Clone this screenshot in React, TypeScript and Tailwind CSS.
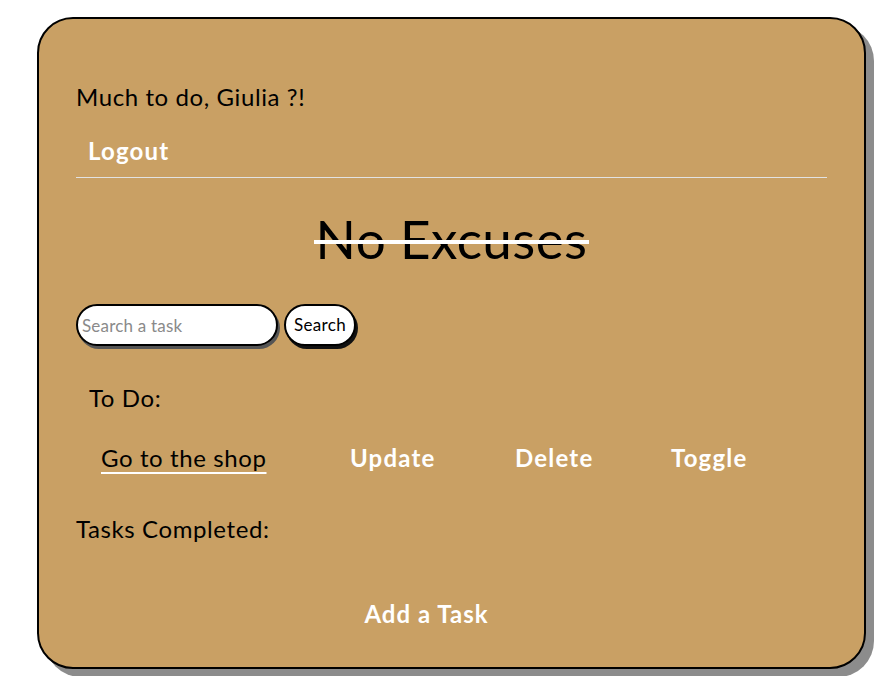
export default function App() {
  return (
    <div
      className="min-h-screen bg-white pt-[17px] pl-[37px] tracking-[0.6px]"
      style={{ fontFamily: "Lato, 'Open Sans', sans-serif" }}
    >
      <div className="w-[829px] h-[652px] rounded-[36px] border-2 border-black bg-[#c9a064] shadow-[8px_8px_0_#8c8c8c] px-[37px] pt-[63px]">
        <p className="text-[24px] leading-[30px] text-black">Much to do, Giulia ?!</p>
        <div className="mt-[24px] border-b border-[#e2e2e2] pb-[11px]">
          <a className="pl-[12px] text-[24px] leading-[30px] font-bold tracking-[1.2px] text-white">Logout</a>
        </div>

        <h1 className="mt-[31px] text-center text-[53px] leading-[60px] tracking-[0.4px] text-black">
          <span className="relative inline-block">
            No Excuses
            <span className="absolute -left-[2px] -right-[2px] top-[31px] h-[4px] bg-white" />
          </span>
        </h1>

        <form className="mt-[35px] flex items-center gap-[6px]">
          <input
            placeholder="Search a task"
            className="h-[42px] w-[202px] rounded-full border-2 border-black bg-white px-[4px] text-[17px] tracking-[0.2px] text-black placeholder:text-[#8a8a8a] shadow-[2px_3px_0_#555] outline-none"
          />
          <button
            type="button"
            className="h-[42px] w-[72px] rounded-full border-2 border-black bg-white text-[17px] tracking-[0.3px] text-black shadow-[2px_3px_0_#111]"
          >
            Search
          </button>
        </form>

        <p className="mt-[37px] pl-[13px] text-[24px] leading-[30px] text-black">To Do:</p>

        <ul className="mt-[30px]">
          <li className="flex items-center pl-[25px] text-[24px] leading-[30px]">
            <span className="w-[249px] text-black underline decoration-white decoration-2 underline-offset-[5px]">
              Go to the shop
            </span>
            <button className="w-[165px] text-left font-bold tracking-[1.2px] text-white">Update</button>
            <button className="w-[156px] text-left font-bold tracking-[1.2px] text-white">Delete</button>
            <button className="text-left font-bold tracking-[1.2px] text-white">Toggle</button>
          </li>
        </ul>

        <p className="mt-[41px] text-[24px] leading-[30px] text-black">Tasks Completed:</p>

        <div className="mt-[55px] flex justify-center pr-[50px]">
          <button className="text-[24px] leading-[30px] font-bold tracking-[1px] text-white">Add a Task</button>
        </div>
      </div>
    </div>
  );
}
